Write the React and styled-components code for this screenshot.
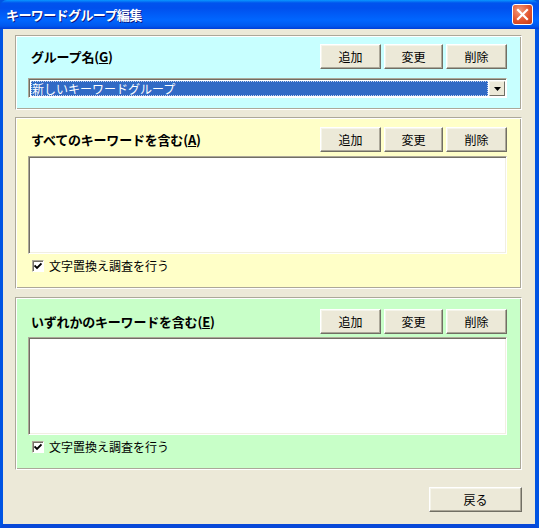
import React from "react";
import styled, { createGlobalStyle } from "styled-components";

const Global = createGlobalStyle`
  html, body { margin: 0; padding: 0; background: #ECE9D8; }
  body { font-family: "Noto Sans CJK JP", "Noto Sans", sans-serif; font-size: 12px; }
`;

const Window = styled.div`
  width: 539px;
  height: 528px;
  display: flex;
  flex-direction: column;
  box-sizing: border-box;
  background: #0054E3;
`;

const TitleBar = styled.div`
  height: 29px;
  flex: none;
  display: flex;
  align-items: center;
  justify-content: space-between;
  padding: 0 6px 0 6px;
  box-sizing: border-box;
  background: linear-gradient(to bottom, #0997FF 0px, #0053EE 3px, #0050EE 8px, #0066FF 20px, #0058EE 26px, #003DD7 29px);
  border-radius: 7px 7px 0 0;
`;

const Title = styled.span`
  color: #fff;
  font-weight: bold;
  font-size: 13px;
  letter-spacing: -0.6px;
  text-shadow: 1px 1px 0 #0A1883;
`;

const CloseButton = styled.div`
  width: 21px;
  height: 21px;
  box-sizing: border-box;
  border: 1px solid #fff;
  border-radius: 3px;
  background: radial-gradient(circle at 35% 30%, #F29B7C 0%, #E2542E 55%, #C33A15 100%);
  display: flex;
  align-items: center;
  justify-content: center;
`;

const Body = styled.div`
  flex: 1;
  background: #ECE9D8;
  border-left: 3px solid #0054E3;
  border-right: 4px solid #0054E3;
  border-bottom: 4px solid #0848D8;
  padding: 6px 13px 0 12px;
  display: flex;
  flex-direction: column;
  box-sizing: border-box;
`;

const Panel = styled.div`
  background: ${(p) => p.$bg};
  border: 1px solid;
  border-color: #ACA899 #fff #fff #ACA899;
  box-shadow: inset 1px 1px 0 #fff, inset -1px -1px 0 #ACA899;
  padding: ${(p) => p.$pad};
  margin-bottom: ${(p) => p.$mb}px;
  display: flex;
  flex-direction: column;
  box-sizing: border-box;
  height: ${(p) => p.$h}px;
`;

const HeaderRow = styled.div`
  display: flex;
  align-items: center;
  justify-content: space-between;
  padding-right: 14px;
`;

const Label = styled.span`
  font-weight: bold;
  font-size: 13px;
  letter-spacing: -0.2px;
  margin-left: 15px;
  color: #000;
  u { text-decoration: underline; }
`;

const ButtonGroup = styled.div`
  display: flex;
  gap: 3px;
`;

const Button = styled.div`
  width: ${(p) => p.$w || 61}px;
  height: 25px;
  box-sizing: border-box;
  background: #ECE9D8;
  border: 1px solid;
  border-color: #fff #716F64 #716F64 #fff;
  box-shadow: inset -1px -1px 0 #ACA899, inset 1px 1px 0 #F5F4EA;
  display: flex;
  align-items: center;
  justify-content: center;
  font-size: 12px;
  color: #000;
`;

const SelectBox = styled.div`
  margin: 9px 14px 0 12px;
  height: 20px;
  box-sizing: border-box;
  background: #fff;
  border: 1px solid;
  border-color: #ACA899 #fff #fff #ACA899;
  box-shadow: inset 1px 1px 0 #716F64;
  display: flex;
  padding: 2px 1px 1px 2px;
`;

const SelectValue = styled.div`
  flex: 1;
  background: #316AC5;
  color: #fff;
  outline: 1px dotted #C9D7F0;
  outline-offset: -1px;
  font-size: 12px;
  line-height: 15px;
  padding-left: 1px;
  white-space: nowrap;
`;

const ArrowButton = styled.div`
  width: 16px;
  box-sizing: border-box;
  background: #ECE9D8;
  border: 1px solid;
  border-color: #F5F4EA #716F64 #716F64 #F5F4EA;
  display: flex;
  align-items: center;
  justify-content: center;
  margin-left: 1px;
`;

const TextArea = styled.div`
  margin: ${(p) => p.$gap}px 14px 0 12px;
  height: 98px;
  box-sizing: border-box;
  background: #fff;
  border: 1px solid;
  border-color: #ACA899 #fff #fff #ACA899;
  box-shadow: inset 1px 1px 0 #716F64, inset -1px -1px 0 #F1EFE2;
`;

const CheckRow = styled.div`
  display: flex;
  align-items: center;
  margin: 4px 0 0 16px;
  height: 15px;
  font-size: 12px;
  color: #000;
`;

const Check = styled.div`
  width: 12px;
  height: 12px;
  box-sizing: border-box;
  background: #fff;
  border: 1px solid;
  border-color: #ACA899 #fff #fff #ACA899;
  box-shadow: inset 1px 1px 0 #716F64;
  display: flex;
  align-items: center;
  justify-content: center;
  margin-right: 5px;
`;

const Footer = styled.div`
  display: flex;
  justify-content: flex-end;
  margin-top: 17px;
`;

const Section = ({ bg, label, letter, h, mb, pad, check, children }) => (
  <Panel $bg={bg} $h={h} $mb={mb} $pad={pad}>
    <HeaderRow>
      <Label>
        {label}(<u>{letter}</u>)
      </Label>
      <ButtonGroup>
        <Button>追加</Button>
        <Button $w={59}>変更</Button>
        <Button>削除</Button>
      </ButtonGroup>
    </HeaderRow>
    {children}
    {check && (
      <CheckRow>
        <Check>
          <svg width="8" height="8" viewBox="0 0 8 8">
            <path d="M0.5 3.5 L3 6 L7.5 1.5" stroke="#000" strokeWidth="1.8" fill="none" />
          </svg>
        </Check>
        文字置換え調査を行う
      </CheckRow>
    )}
  </Panel>
);

export default function App() {
  return (
    <>
      <Global />
      <Window>
        <TitleBar>
          <Title>キーワードグループ編集</Title>
          <CloseButton>
            <svg width="13" height="13" viewBox="0 0 13 13">
              <path d="M2 2 L11 11 M11 2 L2 11" stroke="#fff" strokeWidth="2.2" strokeLinecap="square" />
            </svg>
          </CloseButton>
        </TitleBar>
        <Body>
          <Section bg="#C8FFFF" label="グループ名" letter="G" h={75} mb={7} pad="8px 0 0 0">
            <SelectBox>
              <SelectValue>新しいキーワードグループ</SelectValue>
              <ArrowButton>
                <svg width="7" height="4" viewBox="0 0 7 4">
                  <path d="M0 0 H7 L3.5 4 Z" fill="#000" />
                </svg>
              </ArrowButton>
            </SelectBox>
          </Section>
          <Section bg="#FFFFC8" label="すべてのキーワードを含む" letter="A" h={172} mb={8} pad="9px 0 0 0" check>
            <TextArea $gap={4} />
          </Section>
          <Section bg="#C8FFC8" label="いずれかのキーワードを含む" letter="E" h={173} mb={0} pad="11px 0 0 0" check>
            <TextArea $gap={3} />
          </Section>
          <Footer>
            <Button $w={93}>戻る</Button>
          </Footer>
        </Body>
      </Window>
    </>
  );
}
